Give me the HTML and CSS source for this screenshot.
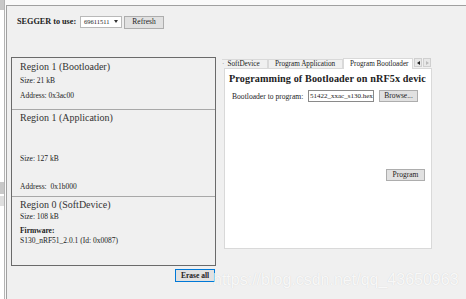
FILE: index.html
```html
<!DOCTYPE html>
<html lang="en">
  <head>
    <meta charset="UTF-8" />
    <meta name="viewport" content="width=device-width, initial-scale=1.0" />
    <title>nRF5x Programmer</title>
    <link rel="stylesheet" href="styles.css">
  </head>

  <body>
    <div id="frame">
      <div id="strip">
        <span class="grip"></span>
        <span class="grip mid"></span>
        <span class="grip low"></span>
      </div>
      <div id="window">
        <div id="toolbar">
          <span class="label">SEGGER to use:</span>
          <span class="select">69611511<span class="caret"></span></span>
          <button class="btn refresh">Refresh</button>
        </div>
        <div id="main">
          <div id="left">
            <div id="regions">
              <div class="region boot">
                <div class="title">Region 1 (Bootloader)</div>
                <div class="info size">Size: 21 kB</div>
                <div class="info addr">Address: 0x3ac00</div>
              </div>
              <div class="region app">
                <div class="title">Region 1 (Application)</div>
                <div class="info size">Size: 127 kB</div>
                <div class="info addr">Address:&nbsp; 0x1b000</div>
              </div>
              <div class="region sd">
                <div class="title">Region 0 (SoftDevice)</div>
                <div class="info size">Size: 108 kB</div>
                <div class="info fw">Firmware:</div>
                <div class="info">S130_nRF51_2.0.1 (Id: 0x0087)</div>
              </div>
            </div>
            <div class="erase-row">
              <button class="btn erase">Erase all</button>
            </div>
          </div>
          <div id="right">
            <div id="tabs">
              <span class="tab cut"><span class="dot">·</span>SoftDevice</span>
              <span class="tab">Program Application</span>
              <span class="tab active">Program Bootloader</span>
              <span class="scroll">
                <span class="arrow left"></span>
                <span class="arrow right"></span>
              </span>
            </div>
            <div id="page">
              <div class="heading">Programming of Bootloader on nRF5x devic</div>
              <div class="file-row">
                <span class="file-label">Bootloader to program:</span>
                <span class="file-input">51422_xxac_s130.hex</span>
                <button class="btn browse">Browse...</button>
              </div>
              <div class="program-row">
                <button class="btn program">Program</button>
              </div>
            </div>
          </div>
        </div>
      </div>
    </div>
    <div id="watermark">https://blog.csdn.net/qq_43650963</div>
  </body>
</html>
```

FILE: styles.css
```css
* {
  margin: 0;
  padding: 0;
  box-sizing: border-box;
}

body {
  width: 466px;
  height: 299px;
  overflow: hidden;
  position: relative;
  background-color: #fafafa;
  font-family: "Liberation Serif", serif;
  color: #222;
}

#frame {
  display: flex;
  height: 299px;
}

#strip {
  width: 5px;
  display: flex;
  flex-direction: column;
  background-color: #fff;
  border-right: 1px solid #b4b4b4;
}

.grip {
  width: 4px;
  height: 10px;
  background-color: #c8c8c8;
}

.grip.mid {
  margin-top: 172px;
  height: 12px;
}

.grip.low {
  margin-top: 2px;
  background-color: #dedede;
}

#window {
  flex: 1;
  margin-top: 5px;
  margin-left: 1px;
  border-top: 1px solid #a0a0a0;
  border-left: 1px solid #a0a0a0;
  background-color: #f0f0f0;
}

#toolbar {
  display: flex;
  align-items: center;
  height: 22px;
  padding: 9px 0 0 10px;
}

.label {
  width: 63px;
  font-size: 8.2px;
  font-weight: bold;
}

.select {
  display: flex;
  align-items: center;
  width: 42px;
  height: 12px;
  padding-left: 3px;
  font-size: 6.5px;
  background-color: #fff;
  border: 1px solid #b9b9b9;
}

.caret {
  margin-left: 4px;
  border-left: 2.5px solid transparent;
  border-right: 2.5px solid transparent;
  border-top: 3px solid #333;
}

.btn {
  font-family: "Liberation Serif", serif;
  font-size: 7.5px;
  color: #222;
  background-color: #e1e1e1;
  border: 1px solid #adadad;
  height: 12px;
  line-height: 10px;
}

.refresh {
  width: 40px;
  height: 13px;
  margin-left: 2px;
  margin-top: 1px;
}

#main {
  display: flex;
  margin-top: 29px;
}

#left {
  width: 205px;
  margin-left: 4px;
}

#regions {
  height: 209px;
  border: 1px solid #6a6a6a;
}

.region {
  padding-left: 8px;
}

.region + .region {
  border-top: 1px solid #a8a8a8;
}

.title {
  font-size: 10px;
  line-height: 12px;
  color: #333;
}

.info {
  font-size: 7.5px;
  line-height: 10px;
}

.fw {
  font-weight: bold;
}

.boot {
  height: 51px;
  padding-top: 3px;
}

.boot .size {
  margin-top: 3px;
}

.boot .addr {
  margin-top: 5px;
}

.app {
  height: 87px;
  padding-top: 2px;
}

.app .size {
  margin-top: 30px;
}

.app .addr {
  margin-top: 18px;
}

.sd {
  padding-top: 2px;
}

.sd .size {
  margin-top: 1px;
}

.sd .fw {
  margin-top: 4px;
}

.erase-row {
  display: flex;
  justify-content: flex-end;
  margin-top: 3px;
  padding-right: 1px;
}

.erase {
  width: 40px;
  height: 13px;
  font-weight: bold;
  border-color: #0078d7;
}

#right {
  width: 210px;
  margin-left: 6px;
  margin-top: 1px;
}

#tabs {
  display: flex;
  align-items: flex-end;
  height: 10px;
  font-size: 7.2px;
}

.tab {
  height: 9px;
  line-height: 9px;
  padding-left: 5px;
  border: 1px solid #d9d9d9;
  border-bottom: none;
  white-space: nowrap;
  background-color: #f0f0f0;
}

.tab.cut {
  width: 46px;
  padding-left: 0;
  border-left: none;
}

.dot {
  color: #888;
  margin-right: 3px;
}

.tab:nth-child(2) {
  width: 75px;
  padding-left: 6px;
}

.tab.active {
  width: 70px;
  height: 11px;
  line-height: 10px;
  padding-left: 6px;
  background-color: #fff;
  margin-bottom: -1px;
  position: relative;
}

.scroll {
  display: flex;
  gap: 1px;
  margin-left: 1px;
  margin-bottom: 1px;
}

.arrow {
  display: flex;
  align-items: center;
  justify-content: center;
  width: 8px;
  height: 9px;
  background-color: #e8e8e8;
  border: 1px solid #cfcfcf;
}

.arrow::after {
  content: "";
  border-top: 2.5px solid transparent;
  border-bottom: 2.5px solid transparent;
}

.arrow.left::after {
  border-right: 3px solid #222;
}

.arrow.right::after {
  border-left: 3px solid #bbb;
}

#page {
  width: 208px;
  height: 181px;
  margin-left: 2px;
  padding: 3px 0 0 4px;
  background-color: #fff;
  border: 1px solid #d9d9d9;
}

.heading {
  font-size: 10.2px;
  font-weight: bold;
  line-height: 14px;
  white-space: nowrap;
  letter-spacing: 0.1px;
}

.file-row {
  display: flex;
  align-items: center;
  margin-top: 4px;
  padding-left: 3px;
}

.file-label {
  width: 76px;
  font-size: 7.6px;
}

.file-input {
  width: 66px;
  height: 12px;
  padding-left: 1px;
  font-size: 7px;
  line-height: 10px;
  white-space: nowrap;
  border: 1px solid #8a8a8a;
  background-color: #fff;
}

.browse {
  width: 39px;
  margin-left: 5px;
}

.program-row {
  display: flex;
  justify-content: flex-end;
  margin-top: 67px;
  padding-right: 6px;
}

.program {
  width: 39px;
}

#watermark {
  position: absolute;
  left: 213px;
  top: 271px;
  font-family: "Liberation Sans", sans-serif;
  font-size: 16px;
  line-height: 18px;
  color: rgba(255, 255, 255, 0.85);
  text-shadow: 0 0 1px rgba(0, 0, 0, 0.14);
}
```
